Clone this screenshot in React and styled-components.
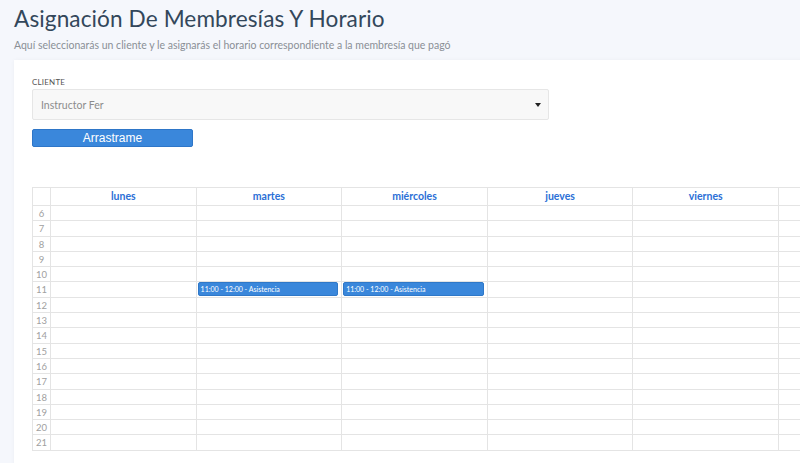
import React from "react";
import styled, { createGlobalStyle } from "styled-components";

const GlobalStyle = createGlobalStyle`
  html, body {
    margin: 0;
    padding: 0;
    background: #f5f7fc;
    overflow: hidden;
  }
  body {
    font-family: Lato, "Open Sans", sans-serif;
  }
`;

// the weekend column is cut by the window edge, so its header stays blank here
const days = ["lunes", "martes", "miércoles", "jueves", "viernes", ""];
const hours = [6, 7, 8, 9, 10, 11, 12, 13, 14, 15, 16, 17, 18, 19, 20, 21];
const events = [
  { day: 1, hour: 11, label: "11:00 - 12:00 - Asistencia" },
  { day: 2, hour: 11, label: "11:00 - 12:00 - Asistencia" },
];

export default function App() {
  return (
    <Page>
      <GlobalStyle />
      <Header>
        <Title>Asignación De Membresías Y Horario</Title>
        <Subtitle>
          Aquí seleccionarás un cliente y le asignarás el horario correspondiente a la membresía que pagó
        </Subtitle>
      </Header>
      <Card>
        <Label>CLIENTE</Label>
        <Select>
          <span>Instructor Fer</span>
          <Caret />
        </Select>
        <DragButton>Arrastrame</DragButton>
        <Calendar>
          <HeadCell />
          {days.map((d, i) => (
            <HeadCell key={i}>{d}</HeadCell>
          ))}
          {hours.map((h) => (
            <React.Fragment key={h}>
              <HourCell>{h}</HourCell>
              {days.map((d, i) => {
                const ev = events.find((e) => e.day === i && e.hour === h);
                return <Cell key={i}>{ev && <Event>{ev.label}</Event>}</Cell>;
              })}
            </React.Fragment>
          ))}
        </Calendar>
      </Card>
    </Page>
  );
}

const Page = styled.div`
  width: 800px;
  height: 463px;
  overflow: hidden;
`;

const Header = styled.div`
  padding: 4px 14px 0;
  height: 56px;
`;

const Title = styled.h1`
  margin: 0;
  font-size: 22.6px;
  font-weight: 400;
  color: #33475b;
  line-height: 30px;
  letter-spacing: 0.1px;
`;

const Subtitle = styled.p`
  margin: 4px 0 0;
  font-size: 10.5px;
  color: #8a8f96;
  line-height: 14px;
`;

const Card = styled.div`
  margin-left: 14px;
  width: 900px;
  height: 420px;
  background: #fff;
  padding: 17px 18px 0;
  box-sizing: border-box;
  box-shadow: 0 0 4px rgba(0, 0, 0, 0.04);
`;

const Label = styled.div`
  font-size: 8px;
  color: #555;
  letter-spacing: 0.2px;
  line-height: 10px;
`;

const Select = styled.div`
  margin-top: 2px;
  width: 517px;
  height: 31px;
  box-sizing: border-box;
  border: 1px solid #e6e6e6;
  border-radius: 2px;
  background: #f8f8f8;
  display: flex;
  align-items: center;
  justify-content: space-between;
  padding: 0 7px 0 8px;
  font-size: 10.5px;
  color: #8c8c8c;
`;

const Caret = styled.span`
  width: 0;
  height: 0;
  border-left: 3.5px solid transparent;
  border-right: 3.5px solid transparent;
  border-top: 4px solid #222;
`;

const DragButton = styled.button`
  display: block;
  margin-top: 9px;
  width: 161px;
  height: 18px;
  border: 1px solid #2e76c8;
  border-radius: 2px;
  background: #3a87db;
  color: #fff;
  font-family: "Liberation Sans", Arial, sans-serif;
  font-size: 12px;
  padding: 0;
  line-height: 16px;
`;

const Calendar = styled.div`
  margin-top: 40px;
  display: grid;
  grid-template-columns: 18px repeat(6, 145.6px);
  grid-template-rows: 18px repeat(16, 15.3px);
  border-top: 1px solid #e4e4e4;
  border-left: 1px solid #e4e4e4;
`;

const BaseCell = styled.div`
  border-right: 1px solid #e4e4e4;
  border-bottom: 1px solid #e4e4e4;
  box-sizing: border-box;
  position: relative;
`;

const HeadCell = styled(BaseCell)`
  color: #2b6fd6;
  font-weight: 700;
  font-size: 10.5px;
  text-align: center;
  line-height: 17px;
`;

const HourCell = styled(BaseCell)`
  color: #a0a0a0;
  font-size: 9.5px;
  text-align: center;
  line-height: 15px;
`;

const Cell = styled(BaseCell)``;

const Event = styled.div`
  position: absolute;
  left: 1px;
  right: 3px;
  top: 0;
  height: 14px;
  background: #3a87db;
  border: 1px solid #2f78c8;
  border-radius: 2px;
  color: #fff;
  font-size: 7px;
  line-height: 12px;
  padding-left: 2px;
  box-sizing: border-box;
  z-index: 1;
`;
